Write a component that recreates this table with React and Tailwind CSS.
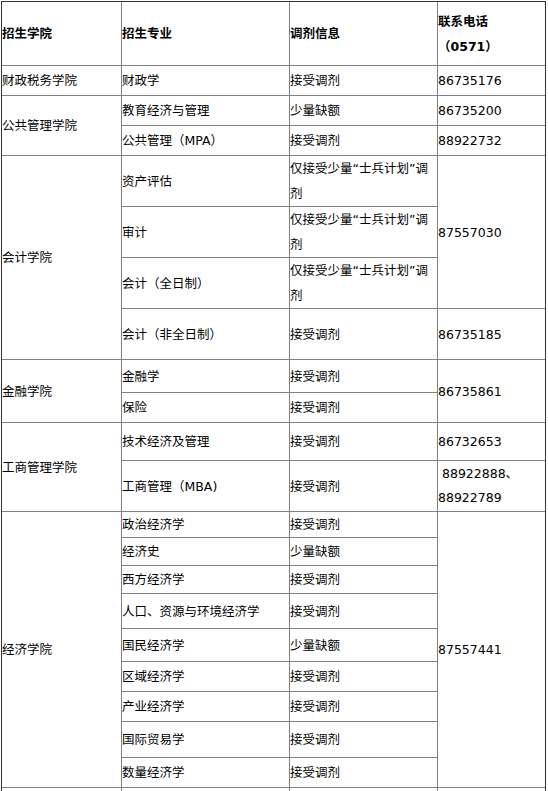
import React from "react";

const G = "border-b border-[#808080]";
const R = "border-r border-[#808080]";
const base = "p-0 align-middle text-left";

function C({ children, last, rowSpan, bold }) {
  return (
    <td
      rowSpan={rowSpan}
      className={`${base} ${G} ${last ? "" : R} ${bold ? "font-bold" : "font-normal"}`}
    >
      {children}
    </td>
  );
}

const quota = (
  <>
    仅接受少量“士兵计划”调
    <br />
    剂
  </>
);

export default function App() {
  return (
    <div className="bg-white w-[548px] h-[791px] overflow-hidden pt-px pl-px">
      <table
        className="border-separate border-spacing-0 table-fixed w-[545px] border-t border-l border-r border-[#333333] text-black text-[12.5px] leading-[25px]"
        style={{ fontFamily: '"DejaVu Sans", "Noto Sans CJK SC", sans-serif' }}
      >
        <colgroup>
          <col className="w-[120px]" />
          <col className="w-[168px]" />
          <col className="w-[148px]" />
          <col className="w-[107px]" />
        </colgroup>
        <tbody>
          <tr className="h-[64px]">
            <C bold>招生学院</C>
            <C bold>招生专业</C>
            <C bold>调剂信息</C>
            <C last bold>
              联系电话
              <br />
              （0571）
            </C>
          </tr>
          <tr className="h-[30px]">
            <C>财政税务学院</C>
            <C>财政学</C>
            <C>接受调剂</C>
            <C last>86735176</C>
          </tr>
          <tr className="h-[30px]">
            <C rowSpan={2}>公共管理学院</C>
            <C>教育经济与管理</C>
            <C>少量缺额</C>
            <C last>86735200</C>
          </tr>
          <tr className="h-[30px]">
            <C>公共管理（MPA）</C>
            <C>接受调剂</C>
            <C last>88922732</C>
          </tr>
          <tr className="h-[51px]">
            <C rowSpan={4}>会计学院</C>
            <C>资产评估</C>
            <C>{quota}</C>
            <C last rowSpan={3}>87557030</C>
          </tr>
          <tr className="h-[51px]">
            <C>审计</C>
            <C>{quota}</C>
          </tr>
          <tr className="h-[51px]">
            <C>会计（全日制）</C>
            <C>{quota}</C>
          </tr>
          <tr className="h-[51px]">
            <C>会计（非全日制）</C>
            <C>接受调剂</C>
            <C last>86735185</C>
          </tr>
          <tr className="h-[33px]">
            <C rowSpan={2}>金融学院</C>
            <C>金融学</C>
            <C>接受调剂</C>
            <C last rowSpan={2}>86735861</C>
          </tr>
          <tr className="h-[30px]">
            <C>保险</C>
            <C>接受调剂</C>
          </tr>
          <tr className="h-[38px]">
            <C rowSpan={2}>工商管理学院</C>
            <C>技术经济及管理</C>
            <C>接受调剂</C>
            <C last>86732653</C>
          </tr>
          <tr className="h-[51px]">
            <C>工商管理（MBA)</C>
            <C>接受调剂</C>
            <C last>
              <span className="block leading-[24px]">
                {"\u00a0"}88922888、
                <br />
                88922789
              </span>
            </C>
          </tr>
          <tr className="h-[26px]">
            <C rowSpan={9}>经济学院</C>
            <C>政治经济学</C>
            <C>接受调剂</C>
            <C last rowSpan={9}>87557441</C>
          </tr>
          <tr className="h-[28px]">
            <C>经济史</C>
            <C>少量缺额</C>
          </tr>
          <tr className="h-[28px]">
            <C>西方经济学</C>
            <C>接受调剂</C>
          </tr>
          <tr className="h-[35px]">
            <C>人口、资源与环境经济学</C>
            <C>接受调剂</C>
          </tr>
          <tr className="h-[33px]">
            <C>国民经济学</C>
            <C>少量缺额</C>
          </tr>
          <tr className="h-[30px]">
            <C>区域经济学</C>
            <C>接受调剂</C>
          </tr>
          <tr className="h-[30px]">
            <C>产业经济学</C>
            <C>接受调剂</C>
          </tr>
          <tr className="h-[36px]">
            <C>国际贸易学</C>
            <C>接受调剂</C>
          </tr>
          <tr className="h-[30px]">
            <C>数量经济学</C>
            <C>接受调剂</C>
          </tr>
          <tr className="h-[30px]">
            <C>{"\u00a0"}</C>
            <C>{"\u00a0"}</C>
            <C>{"\u00a0"}</C>
            <C last>{"\u00a0"}</C>
          </tr>
        </tbody>
      </table>
    </div>
  );
}
